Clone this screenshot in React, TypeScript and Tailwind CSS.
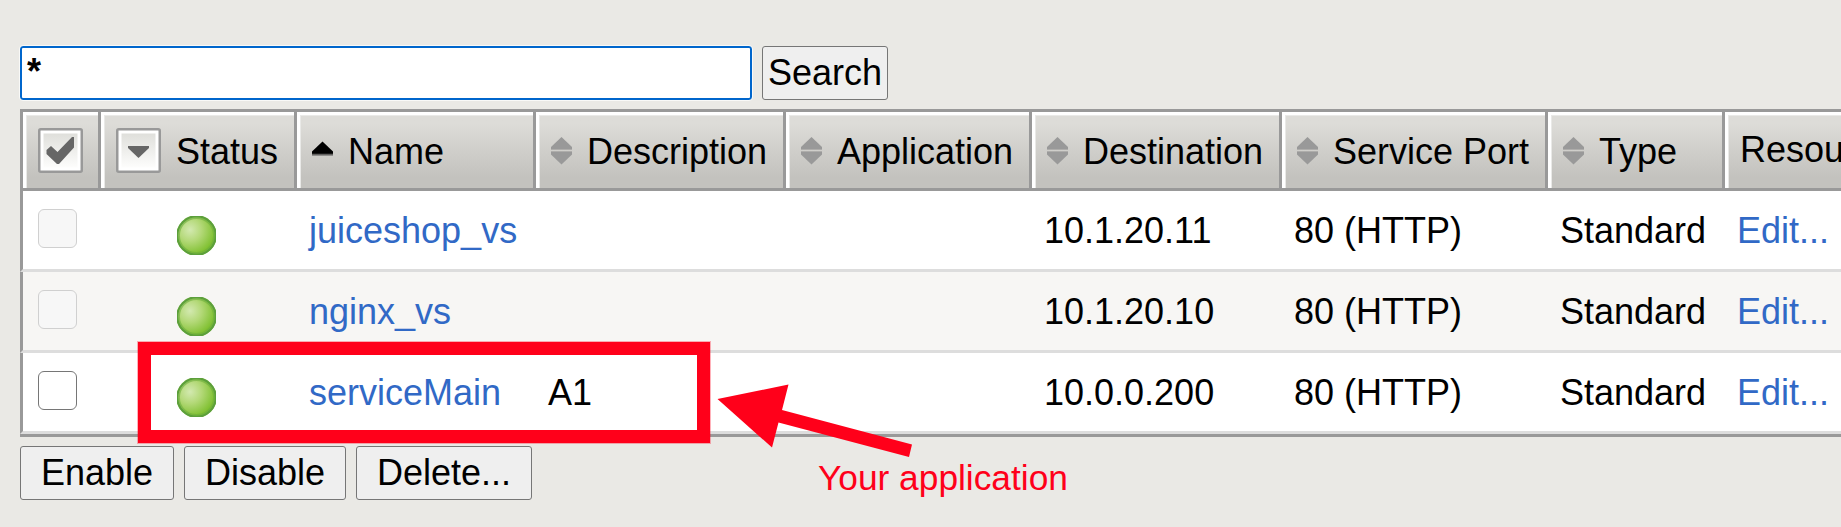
import React from "react";

const cols = [
  { key: "sel", w: "w-[78px]" },
  { key: "status", w: "w-[196px]" },
  { key: "name", w: "w-[239px]" },
  { key: "desc", w: "w-[250px]" },
  { key: "app", w: "w-[246px]" },
  { key: "dest", w: "w-[250px]" },
  { key: "port", w: "w-[266px]" },
  { key: "type", w: "w-[177px]" },
  { key: "res", w: "w-[300px]" },
];

const sortable = [
  { col: 3, label: "Description" },
  { col: 4, label: "Application" },
  { col: 5, label: "Destination" },
  { col: 6, label: "Service Port" },
  { col: 7, label: "Type" },
];

const rows = [
  { name: "juiceshop_vs", desc: "", dest: "10.1.20.11", disabled: true },
  { name: "nginx_vs", desc: "", dest: "10.1.20.10", disabled: true },
  { name: "serviceMain", desc: "A1", dest: "10.0.0.200", disabled: false },
];

function SortBoth() {
  return (
    <svg width="21" height="28" viewBox="0 0 21 28" className="-mt-[2px] shrink-0">
      <path d="M10.5 0L21 10V12H0V10Z" fill="#999" />
      <path d="M10.5 27.5L21 17.500V15H0V17.500Z" fill="#999" />
      <path d="M0 12H21V13H0ZM0 14H21V15H0Z" fill="#aeadab" />
    </svg>
  );
}

function SortUp() {
  return (
    <svg width="21" height="28" viewBox="0 0 21 28" className="-mt-[2px] shrink-0">
      <path d="M10.5 4.500L21 14.500V17H0V14.500Z" fill="#000" />
      <path d="M0 17H21V19H0Z" fill="#8f8e8c" />
      <path d="M0 16.500H21V17.500H0Z" fill="#333" />
    </svg>
  );
}

function BoxIcon({ children }: { children: React.ReactNode }) {
  return (
    <svg width="45" height="45" viewBox="0 0 45 45" className="-mt-[3px] shrink-0">
      <defs>
        <linearGradient id="boxface" x1="0" y1="0" x2="0" y2="1">
          <stop offset="0" stopColor="#dfdfdb" />
          <stop offset="1" stopColor="#fdfdfc" />
        </linearGradient>
      </defs>
      <rect x="1.25" y="1.25" width="42.5" height="42.5" rx="1.5" fill="#fff" stroke="#999" strokeWidth="2.5" />
      <rect x="5.5" y="5.5" width="34" height="34" fill="url(#boxface)" />
      {children}
    </svg>
  );
}

function StatusDot() {
  return (
    <svg width="39" height="39" viewBox="0 0 39 39" className="shrink-0">
      <defs>
        <radialGradient id="dot" cx="0.34" cy="0.36" r="0.62">
          <stop offset="0" stopColor="#d3e9b0" />
          <stop offset="0.45" stopColor="#b4d979" />
          <stop offset="1" stopColor="#7fc030" />
        </radialGradient>
      </defs>
      <circle cx="19.5" cy="19.5" r="20.2" fill="url(#dot)" />
      <circle cx="19.5" cy="19.5" r="19.2" fill="none" stroke="#5c9f3c" strokeWidth="2.2" />
      <circle cx="19.5" cy="19.5" r="17.4" fill="none" stroke="#6dae3c" strokeWidth="1.6" opacity="0.6" />
    </svg>
  );
}

function Head({ w, sep = true, children }: { w: string; sep?: boolean; children: React.ReactNode }) {
  return (
    <div className={`${w} flex h-[76px] shrink-0 ${sep ? "border-r-[3px] border-[#999]" : ""}`}>
      <div className="flex h-full w-full border-t-[3px] border-l-[3px] border-white">
        <div className="flex h-full w-full items-center border-t border-l border-[#e9e9e7] bg-linear-to-b from-[#dddcd8] from-10% to-[#c3c2be] to-85% pl-[11px] whitespace-nowrap">
          {children}
        </div>
      </div>
    </div>
  );
}

function Button({ w, children }: { w: string; children: React.ReactNode }) {
  return (
    <button className={`${w} flex h-[54px] items-center justify-center rounded-[3px] border border-[#767676] bg-[#efefef] leading-none`}>
      {children}
    </button>
  );
}

export default function App() {
  return (
    <div className="relative h-[527px] w-[1841px] overflow-hidden bg-[#eae9e5] pt-[46px] pl-5 font-['Liberation_Sans',Arial,sans-serif] text-[36px] text-black">
      <div className="flex gap-[10px]">
        <div className="flex h-[54px] w-[732px] items-start rounded-[3px] border-2 border-[#0066cc] bg-white pl-[5px] leading-[47px] font-bold outline outline-white/70">
          *
        </div>
        <Button w="w-[126px]">Search</Button>
      </div>

      <div className="mt-[9px] w-[2005px] border-t-[3px] border-b-[3px] border-[#999]">
        <div className="flex border-b-[3px] border-l-[3px] border-[#999]">
          <Head w={cols[0].w}>
            <BoxIcon>
              <path d="M8.500 22L13 18L19.500 24L34 9L36 9V19.500L21 36H19L8.500 26Z" fill="#666" />
            </BoxIcon>
          </Head>
          <Head w={cols[1].w}>
            <BoxIcon>
              <path d="M12 18H33V20L22.500 30L12 20Z" fill="#666" />
            </BoxIcon>
            <span className="ml-[15px]">Status</span>
          </Head>
          <Head w={cols[2].w}>
            <SortUp />
            <span className="ml-[15px]">Name</span>
          </Head>
          {sortable.map((s) => (
            <Head key={s.label} w={cols[s.col].w}>
              <SortBoth />
              <span className="ml-[15px]">{s.label}</span>
            </Head>
          ))}
          <Head w={cols[8].w} sep={false}>
            <span className="-mt-1">Resources</span>
          </Head>
        </div>

        {rows.map((r, i) => (
          <div
            key={r.name}
            className={`flex h-[81px] items-center border-b-[3px] border-l-[3px] border-b-[#ddd] border-l-[#999] leading-[54px] whitespace-nowrap ${i === 1 ? "bg-[#f7f6f4]" : "bg-white"}`}
          >
            <div className={`${cols[0].w} shrink-0 pb-[4px] pl-[15px]`}>
              <div
                className={`h-[39px] w-[39px] rounded-[6px] border ${r.disabled ? "border-[#d0d0d0] bg-[#f7f7f7]" : "border-[#767676] bg-white"}`}
              />
            </div>
            <div className={`${cols[1].w} shrink-0 pt-[11px] pl-[76px]`}>
              <StatusDot />
            </div>
            <div className={`${cols[2].w} shrink-0 pt-[2px] pl-[12px] text-[#3169c6]`}>{r.name}</div>
            <div className={`${cols[3].w} shrink-0 pt-[2px] pl-[12px]`}>{r.desc}</div>
            <div className={`${cols[4].w} shrink-0`} />
            <div className={`${cols[5].w} shrink-0 pt-[2px] pl-[12px]`}>{r.dest}</div>
            <div className={`${cols[6].w} shrink-0 pt-[2px] pl-[12px]`}>80 (HTTP)</div>
            <div className={`${cols[7].w} shrink-0 pt-[2px] pl-[12px]`}>Standard</div>
            <div className={`${cols[8].w} shrink-0 pt-[2px] pl-[12px] text-[#3169c6]`}>Edit...</div>
          </div>
        ))}
      </div>

      <div className="mt-[9px] flex gap-[10px]">
        <Button w="w-[154px]">Enable</Button>
        <Button w="w-[162px]">Disable</Button>
        <Button w="w-[176px]">Delete...</Button>
      </div>

      <div className="absolute top-[342px] left-[138px] h-[101px] w-[572px] border-[13px] border-[#ff001a] outline outline-[#ff001a]/30" />
      <svg className="absolute top-[380px] left-[710px]" width="210" height="80" viewBox="710 380 210 80">
        <path d="M717.500 399L788.500 384.500L782 410L912 444.500L909 457L778.500 422.500L772 447.500Z" fill="#ff001a" />
      </svg>
      <div className="absolute top-[458px] left-[818px] text-[35.3px] leading-[40px] whitespace-nowrap text-[#ff001a]">
        Your application
      </div>
    </div>
  );
}
